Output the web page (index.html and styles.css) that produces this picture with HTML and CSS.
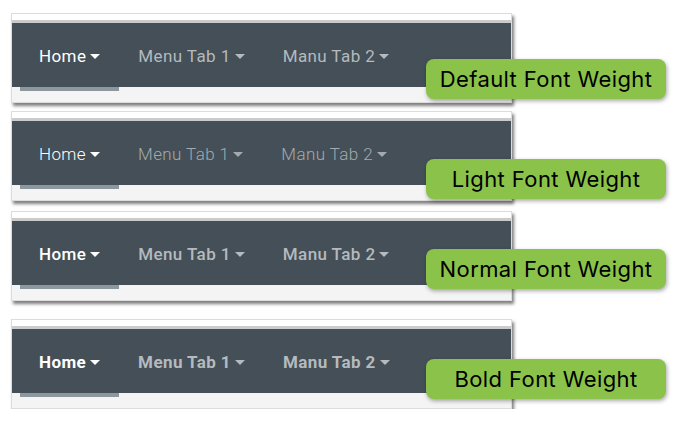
FILE: index.html
```html
<!DOCTYPE html>
<html lang="en">
<head>
    <meta charset="UTF-8">
    <meta name="viewport" content="width=device-width, initial-scale=1.0">
    <title>Tab Font Weights</title>
    <link rel="stylesheet" href="styles.css">
</head>
<body>
    <div class="demo demo-default">
        <div class="panel">
            <div class="nav">
                <div class="tab active">Home<span class="caret"></span></div>
                <div class="tab">Menu Tab 1<span class="caret"></span></div>
                <div class="tab">Manu Tab 2<span class="caret"></span></div>
            </div>
        </div>
        <div class="label">Default Font Weight</div>
    </div>

    <div class="demo demo-light">
        <div class="panel">
            <div class="nav">
                <div class="tab active">Home<span class="caret"></span></div>
                <div class="tab">Menu Tab 1<span class="caret"></span></div>
                <div class="tab">Manu Tab 2<span class="caret"></span></div>
            </div>
        </div>
        <div class="label">Light Font Weight</div>
    </div>

    <div class="demo demo-normal">
        <div class="panel">
            <div class="nav">
                <div class="tab active">Home<span class="caret"></span></div>
                <div class="tab">Menu Tab 1<span class="caret"></span></div>
                <div class="tab">Manu Tab 2<span class="caret"></span></div>
            </div>
        </div>
        <div class="label">Normal Font Weight</div>
    </div>

    <div class="demo demo-bold">
        <div class="panel">
            <div class="nav">
                <div class="tab active">Home<span class="caret"></span></div>
                <div class="tab">Menu Tab 1<span class="caret"></span></div>
                <div class="tab">Manu Tab 2<span class="caret"></span></div>
            </div>
        </div>
        <div class="label">Bold Font Weight</div>
    </div>
</body>
</html>
```

FILE: styles.css
```css
*{
  margin:0;
  padding:0;
  box-sizing:border-box;
}
body{
  background:#fff;
  padding:13px 0 0 11px;
  font-family:Roboto, "Liberation Sans", sans-serif;
}
.demo{
  position:relative;
  width:501px;
}
.demo-light{
  margin-top:8px;
}
.demo-normal{
  margin-top:10px;
}
.demo-bold{
  margin-top:18px;
}

.panel{
  border:1px solid #dcdcdc;
  background:#f4f4f4;
  height:90px;
  padding-top:6px;
  box-shadow:2px 3px 3px rgba(0,0,0,0.5);
}
  .panel::before{
      content:"";
      display:block;
      height:3px;
      background:#cbcbcb;
      margin-top:-6px;
      border-top:6px solid #fff;
      box-sizing:content-box;
  }
  .nav{
      display:flex;
      align-items:center;
      height:64px;
      background:#444f57;
      padding-left:8px;
  }
  .tab{
      position:relative;
      display:flex;
      align-items:center;
      height:100%;
      padding:1px 19px 0;
      font-size:17px;
      letter-spacing:0.4px;
      color:#b4babe;
  }
  .tab.active{
      color:#fff;
  }
  .tab.active::after{
      content:"";
      position:absolute;
      left:0;
      right:0;
      top:100%;
      height:4px;
      background:#8c979e;
  }
  .caret{
      display:inline-block;
      margin-left:4px;
      margin-top:1px;
      border-top:5px solid currentColor;
      border-left:5px solid transparent;
      border-right:5px solid transparent;
  }

  .demo-light .tab{
      font-weight:300;
      color:#a3aaae;
  }
  .demo-light .tab.active{
      color:#fff;
  }
  .demo-normal .tab{
      font-weight:500;
  }
  .demo-bold .tab{
      font-weight:700;
  }

  .label{
      position:absolute;
      left:415px;
      width:240px;
      height:40px;
      background:#8bc34a;
      border-radius:8px;
      box-shadow:1px 2px 4px rgba(0,0,0,0.35);
      display:flex;
      align-items:center;
      justify-content:center;
      font-family:Inter, "Noto Sans", sans-serif;
      font-size:22px;
      letter-spacing:0.4px;
      color:#000;
  }
  .demo-default .label{ top:46px; }
  .demo-light .label{ top:48px; }
  .demo-normal .label{ top:38px; }
  .demo-bold .label{ top:40px; }
```
